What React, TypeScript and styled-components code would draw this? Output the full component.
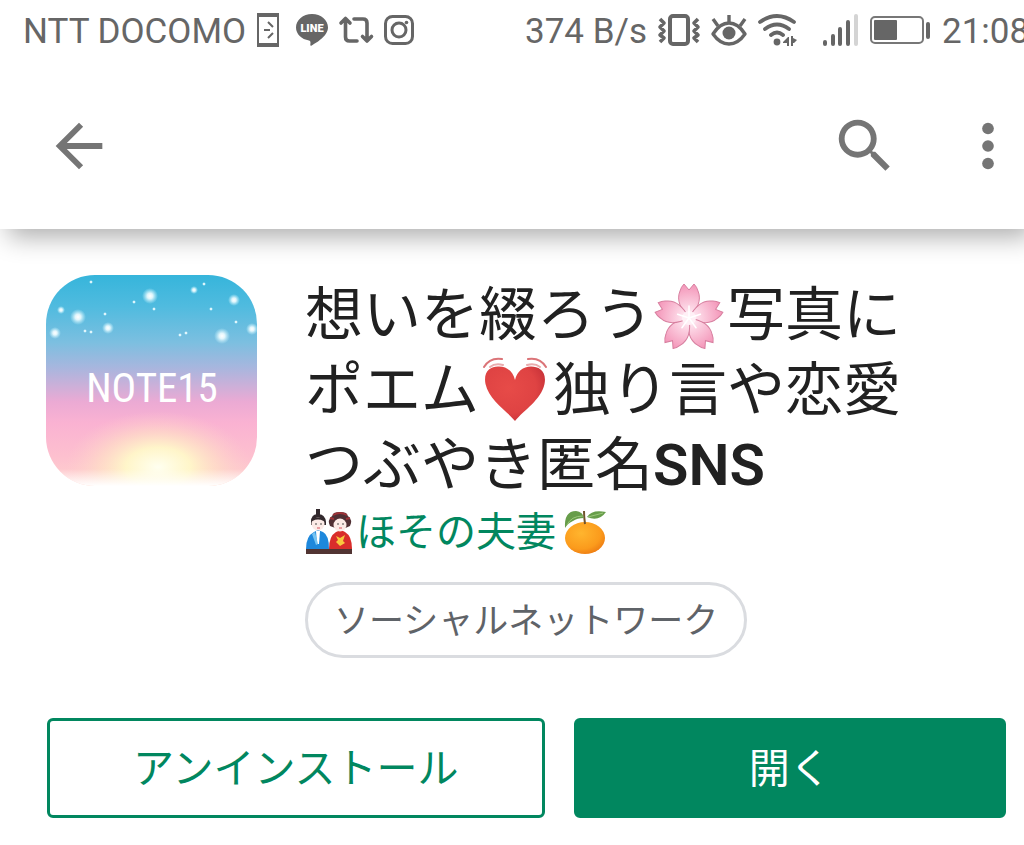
import React from 'react';
import styled, { createGlobalStyle } from 'styled-components';

const GlobalStyle = createGlobalStyle`
  *, *::before, *::after { box-sizing: border-box; }
  body {
    margin: 0;
    background: #fff;
    color: #212121;
    font-family: Roboto, "Noto Sans CJK JP", sans-serif;
  }
`;

const Page = styled.div`
  min-height: 100vh;
  padding-bottom: 24px;
  overflow: hidden;
`;

const Header = styled.header`
  background: #fff;
  box-shadow: 8px 8px 24px rgba(0, 0, 0, 0.32);
`;

const StatusBar = styled.div`
  display: flex;
  align-items: center;
  justify-content: space-between;
  height: 60px;
  padding-left: 23px;
  overflow: hidden;
  color: #666;
  font-size: 35px;
  line-height: 60px;
  white-space: nowrap;
`;

const StatusGroup = styled.div<{ $gap: number }>`
  display: flex;
  align-items: center;
  gap: ${(p) => p.$gap}px;
`;

const StatusText = styled.span<{ $width?: number }>`
  width: ${(p) => (p.$width ? `${p.$width}px` : 'auto')};
  padding-top: 3px;
  overflow: hidden;
`;

const Glyph = styled.svg`
  display: block;
  flex: none;
  overflow: visible;
`;

const Toolbar = styled.nav`
  display: flex;
  align-items: center;
  height: 169px;
  padding: 2px 1px 0 44px;
`;

const ToolbarActions = styled.div`
  display: flex;
  gap: 53px;
  margin-left: auto;
`;

const IconButton = styled.button`
  display: block;
  padding: 0;
  border: 0;
  background: none;
  color: #757575;
  cursor: pointer;
`;

const Listing = styled.main`
  padding: 46px 18px 0 46px;
`;

const Summary = styled.section`
  display: flex;
  align-items: flex-start;
  gap: 48px;
`;

const Details = styled.div`
  flex: 1;
  min-width: 0;
`;

const Title = styled.h1`
  margin: 0;
  font-size: 58px;
  font-weight: 400;
  line-height: 80px;
  white-space: nowrap;
`;

const TitleLine = styled.span`
  display: flex;
  align-items: flex-start;
  height: 75px;
`;

const Latin = styled.span`
  font-weight: 600;
`;

const Developer = styled.a`
  display: flex;
  align-items: flex-start;
  height: 62px;
  color: #01875f;
  font-size: 40px;
  line-height: 66px;
  text-decoration: none;
  white-space: nowrap;
`;

const Chip = styled.a`
  display: inline-block;
  margin-top: 20px;
  padding: 4px 26px 0;
  border: 3px solid #dadce0;
  border-radius: 38px;
  color: #5f6368;
  font-size: 35px;
  line-height: 66px;
  text-decoration: none;
  white-space: nowrap;
`;

const Actions = styled.div`
  display: flex;
  gap: 29px;
  margin-top: 60px;
  padding-left: 1px;
`;

const ActionButton = styled.button<{ $filled?: boolean }>`
  flex: ${(p) => (p.$filled ? 432 : 498)} 1 0;
  height: 100px;
  padding: 2px 0 0;
  border: 3px solid #01875f;
  border-radius: 6px;
  background: ${(p) => (p.$filled ? '#01875f' : '#fff')};
  color: ${(p) => (p.$filled ? '#fff' : '#01875f')};
  font-family: inherit;
  font-size: 41px;
  line-height: 60px;
  cursor: pointer;
`;

const DoorIcon = () => (
  <Glyph width="22" height="34" viewBox="0 0 22 34" fill="none" stroke="#666" strokeWidth="2">
    <path d="M1 1h20v32H1z" />
    <path d="M0 2h22M0 32h22" strokeWidth="4" />
    <path d="M7 17h6M11 9l5 5M11 25l5-5" />
  </Glyph>
);

const LineIcon = () => (
  <Glyph width="32" height="32" viewBox="0 0 32 32">
    <path fill="#666" d="M16 0C7 0 0 6 0 13.500c0 6.500 5.500 11.800 13 13 1.800.3 1.600 2 1.300 4.300-.1.900.6 1.100 1.400.6C20 29 32 22 32 13.500 32 6 25 0 16 0z" />
    <text x="16" y="18" textAnchor="middle" fill="#fff" fontFamily="Roboto, sans-serif" fontSize="11" fontWeight="900">LINE</text>
  </Glyph>
);

const RepostIcon = () => (
  <Glyph width="34" height="26" viewBox="0 0 34 26" fill="none" stroke="#666" strokeWidth="3.600" strokeLinecap="round" strokeLinejoin="round">
    <path d="M2 6l4.500-4.500L11 6M6.500 2v18q0 4 4 4H18M15 2h9q4 0 4 4v17M23.500 19.500L28 24l4.500-4.500" />
  </Glyph>
);

const CameraIcon = () => (
  <Glyph width="30" height="30" viewBox="0 0 30 30" fill="none" stroke="#666" strokeWidth="3">
    <rect x="1.500" y="1.500" width="27" height="27" rx="7" />
    <circle cx="15" cy="15" r="7" />
    <circle cx="22.500" cy="7.500" r="1.800" fill="#666" stroke="none" />
  </Glyph>
);

const VibrateIcon = () => (
  <Glyph width="42" height="34" viewBox="0 0 42 34" fill="none" stroke="#666" strokeWidth="3.600" strokeLinejoin="round">
    <rect x="12" y="3" width="18" height="28" rx="3" strokeWidth="4" />
    <path d="M2 6l4 4-4 4 4 4-4 4 4 3-4 4M40 6l-4 4 4 4-4 4 4 4-4 3 4 4" />
  </Glyph>
);

const EyeIcon = () => (
  <Glyph width="36" height="32" viewBox="0 0 36 32" fill="none" stroke="#666" strokeWidth="3.400" strokeLinejoin="round">
    <path d="M2 20Q9 9 18 9t16 11Q27 30 18 30T2 20z" />
    <path d="M18 9V1M7 12L2 5M29 12l5-7" />
    <circle cx="18" cy="19" r="6.500" fill="#666" stroke="none" />
  </Glyph>
);

const WifiIcon = () => (
  <Glyph width="39" height="32" viewBox="0 0 39 32" fill="none" stroke="#666" strokeWidth="3.800" strokeLinecap="round">
    <path d="M2 8q17-12 34 0M7 15q12-9 24 0M13 21q6-5 12 0" />
    <circle cx="19" cy="28" r="3.400" fill="#666" stroke="none" />
    <path fill="#666" stroke="none" d="M25 28l5-5h1v9h-2v-3h-4zM33 22h2v2l4 2-3 3h-1v3h-2z" />
  </Glyph>
);

const SignalIcon = () => (
  <Glyph width="35" height="32" viewBox="0 0 35 32" fill="none" stroke="#666" strokeWidth="4" strokeLinecap="round">
    <path d="M2 28v2M10 22v8M17 15v15M25 8v22" />
    <path d="M33 2v28" stroke="#d4d4d4" />
  </Glyph>
);

const BatteryIcon = () => (
  <Glyph width="60" height="28" viewBox="0 0 60 28">
    <rect x="1" y="1" width="52" height="26" rx="4" fill="none" stroke="#777" strokeWidth="2" />
    <rect x="4" y="4" width="23" height="20" rx="1" fill="#666" />
    <rect x="56" y="6" width="4" height="17" rx="2" fill="#666" />
  </Glyph>
);

const Blossom = () => (
  <Glyph role="img" aria-label="桜" width="74" height="75" viewBox="-5 0 74 75">
    <defs>
      <radialGradient id="petal" gradientUnits="userSpaceOnUse" cx="31" cy="42" r="34">
        <stop offset="0" stopColor="#fff5fa" />
        <stop offset="0.3" stopColor="#fcd5e4" />
        <stop offset="1" stopColor="#f392b6" />
      </radialGradient>
    </defs>
    <g fill="url(#petal)" stroke="#d77f9f" strokeWidth="1">
      {[0, 72, 144, 216, 288].map((angle) => (
        <path key={angle} transform={`rotate(${angle} 31 43)`} d="M31 43C23 35 18 25 22 16q1-4 4-7l5 6 5-6q3 3 4 7c4 9-1 19-9 27z" />
      ))}
    </g>
    <circle cx="31" cy="43" r="7" fill="#fff0f6" />
    <g stroke="#fff" strokeWidth="1.500" strokeLinecap="round">
      {[0, 72, 144, 216, 288].map((angle) => (
        <path key={angle} transform={`rotate(${angle} 31 43)`} d="M31 43V31" />
      ))}
    </g>
  </Glyph>
);

const BeatingHeart = () => (
  <Glyph role="img" aria-label="ときめくハート" width="74" height="75" viewBox="-3 0 74 75">
    <defs>
      <radialGradient id="heart" cx="0.4" cy="0.4" r="0.65">
        <stop offset="0" stopColor="#e74b48" />
        <stop offset="0.7" stopColor="#df4343" />
        <stop offset="1" stopColor="#c93339" />
      </radialGradient>
    </defs>
    <path fill="url(#heart)" d="M33 71C24 60 7 50 3.500 34 1 21 9 16 17 16.500c8 0 14 5 16 13.500 2-8.500 8-13.500 16-13.500s16 4.500 13.500 17.500C59 50 42 60 33 71z" />
    <g fill="none" stroke="#db7478" strokeWidth="2" strokeLinecap="round">
      <path d="M2 17Q8 7 20 9M64 17Q58 7 46 9" />
      <path d="M8 17q5-4 13-2M58 17q-5-4-13-2" stroke="#e9abad" />
    </g>
  </Glyph>
);

const HinaDolls = () => (
  <Glyph role="img" aria-label="ひな人形" width="51" height="62" viewBox="0 0 51 62">
    <path fill="#513432" d="M1 49h46v5H1z" />
    <path fill="#1e88dc" d="M1 49q0-13 8-17l4-2 5 2q6 3 6 17z" />
    <path fill="#d92d2b" d="M24 49q0-13 7-17l5-2 4 2q7 4 7 17z" />
    <path fill="#fff" d="M11 31h4l-1 13h-2z" />
    <path fill="#76c4f2" d="M10 32l3 12-2 1-4-11z" />
    <path fill="#f9c83e" d="M31 36l4 2 5-3-2 6 2 2-5 3-4-4 2-2z" />
    <path fill="#32292d" d="M11 9h4v7h-4zM6 22q0-8 7-8t8 8v3H6z" />
    <circle cx="13" cy="24" r="6.500" fill="#fcebe7" />
    <path fill="#503034" d="M25 26q-3-6 2-10l2-3q6-2 12 0l2 3q5 4 2 10-9 5-20 0z" />
    <ellipse cx="35" cy="25" rx="6.500" ry="6.500" fill="#fcebe7" />
    <path d="M28 15q7-4 14 0M25 18l4 1M45 18l-4 1" fill="none" stroke="#9e3237" strokeWidth="2" />
    <path d="M7 20q6-3 12 0" fill="none" stroke="#32292d" strokeWidth="2" />
    <g fill="#333"><circle cx="11" cy="24" r="0.800" /><circle cx="16" cy="24" r="0.800" /><circle cx="33" cy="24" r="0.800" /><circle cx="38" cy="24" r="0.800" /></g>
    <path d="M12 28h3M34 28h3" stroke="#d6505c" />
  </Glyph>
);

const Tangerine = () => (
  <Glyph role="img" aria-label="みかん" width="50" height="62" viewBox="0 0 50 62">
    <defs>
      <radialGradient id="tangerine" cx="0.4" cy="0.35" r="0.7">
        <stop offset="0" stopColor="#ffb52e" />
        <stop offset="0.7" stopColor="#fb9b1c" />
        <stop offset="1" stopColor="#ed7b12" />
      </radialGradient>
    </defs>
    <ellipse cx="29" cy="38" rx="20" ry="16" fill="url(#tangerine)" />
    <path d="M29 24q-1-7-1-13" fill="none" stroke="#70532d" strokeWidth="2" />
    <path fill="#679d4a" d="M9 28q-1-17 11-17 7 1 8 7-7 0-11 3-5 2-8 7zM31 17q5-8 19-5-7 10-19 5z" />
    <path d="M11 25q4-9 16-9M32 17l15-4" fill="none" stroke="#9cc77b" />
  </Glyph>
);

const STARS: [number, number, number][] = [
  [104, 21, 4], [32, 42, 4], [176, 61, 4], [188, 25, 3], [148, 15, 2], [62, 53, 3],
  [9, 58, 3], [15, 35, 2], [206, 54, 3], [45, 7, 1], [158, 9, 1], [59, 39, 1],
  [190, 47, 1], [108, 34, 1], [39, 56, 1], [45, 57, 1], [134, 60, 1], [140, 58, 1],
  [165, 34, 1], [88, 27, 1],
];

const AppLogo = () => (
  <Glyph role="img" aria-label="NOTE15" width="211" height="211" viewBox="0 0 211 211">
    <defs>
      <linearGradient id="sky" x1="0" y1="0" x2="0" y2="1">
        <stop offset="0" stopColor="#36b5db" />
        <stop offset="0.15" stopColor="#50bbdf" />
        <stop offset="0.32" stopColor="#7cbfe0" />
        <stop offset="0.44" stopColor="#a8b6de" />
        <stop offset="0.6" stopColor="#ebaad4" />
        <stop offset="0.7" stopColor="#fab2d2" />
        <stop offset="0.86" stopColor="#fdc0cf" />
        <stop offset="1" stopColor="#ffd3cd" />
      </linearGradient>
      <radialGradient id="sunrise">
        <stop offset="0" stopColor="#fffff0" />
        <stop offset="0.35" stopColor="#fffbc9" stopOpacity="0.9" />
        <stop offset="0.65" stopColor="#ffe9c4" stopOpacity="0.5" />
        <stop offset="1" stopColor="#ffd5cc" stopOpacity="0" />
      </radialGradient>
      <linearGradient id="horizon" x1="0" y1="0" x2="0" y2="1">
        <stop offset="0" stopColor="#fff" stopOpacity="0" />
        <stop offset="1" stopColor="#fff" />
      </linearGradient>
      <radialGradient id="star">
        <stop offset="0" stopColor="#fff" />
        <stop offset="0.35" stopColor="#effcff" stopOpacity="0.9" />
        <stop offset="1" stopColor="#c8f4ff" stopOpacity="0" />
      </radialGradient>
      <clipPath id="tile"><rect width="211" height="211" rx="49" /></clipPath>
    </defs>
    <g clipPath="url(#tile)">
      <rect width="211" height="211" fill="url(#sky)" />
      <ellipse cx="112" cy="192" rx="92" ry="56" fill="url(#sunrise)" />
      <rect y="194" width="211" height="17" fill="url(#horizon)" />
      {STARS.map(([x, y, size]) => (
        <circle key={`${x}-${y}`} cx={x} cy={y} r={size * 2} fill="url(#star)" />
      ))}
    </g>
    <text x="106" y="127" textAnchor="middle" fill="#fff" fontFamily="'Roboto Condensed', 'Liberation Sans Narrow', Roboto, sans-serif" fontSize="41">NOTE15</text>
  </Glyph>
);

const BackIcon = () => (
  <Glyph width="70" height="70" viewBox="0 0 24 24" fill="currentColor">
    <path d="M20 11H7.830l5.590-5.590L12 4l-8 8 8 8 1.410-1.410L7.830 13H20v-2z" />
  </Glyph>
);

const SearchIcon = () => (
  <Glyph width="70" height="70" viewBox="0 0 24 24" fill="currentColor">
    <path d="M15.500 14h-.79l-.28-.27A6.471 6.471 0 0 0 16 9.500 6.500 6.500 0 1 0 9.500 16c1.610 0 3.090-.59 4.230-1.570l.27.28v.79l5 4.990L20.490 19l-4.990-5zm-6 0C7.010 14 5 11.990 5 9.500S7.010 5 9.500 5 14 7.010 14 9.500 11.990 14 9.500 14z" />
  </Glyph>
);

const MoreIcon = () => (
  <Glyph width="70" height="70" viewBox="0 0 24 24" fill="currentColor">
    <circle cx="12" cy="6" r="2" />
    <circle cx="12" cy="12" r="2" />
    <circle cx="12" cy="18" r="2" />
  </Glyph>
);

export default function App() {
  return (
    <Page>
      <GlobalStyle />
      <Header>
        <StatusBar>
          <StatusGroup $gap={17}>
            <StatusGroup $gap={11}>
              <StatusText>NTT DOCOMO</StatusText>
              <DoorIcon />
            </StatusGroup>
            <StatusGroup $gap={11}>
              <LineIcon />
              <RepostIcon />
              <CameraIcon />
            </StatusGroup>
          </StatusGroup>
          <StatusGroup $gap={26}>
            <StatusGroup $gap={11}>
              <StatusText>374 B/s</StatusText>
              <VibrateIcon />
              <EyeIcon />
              <WifiIcon />
            </StatusGroup>
            <StatusGroup $gap={12}>
              <SignalIcon />
              <BatteryIcon />
              <StatusText $width={82}>21:08</StatusText>
            </StatusGroup>
          </StatusGroup>
        </StatusBar>
        <Toolbar>
          <IconButton type="button" aria-label="戻る"><BackIcon /></IconButton>
          <ToolbarActions>
            <IconButton type="button" aria-label="検索"><SearchIcon /></IconButton>
            <IconButton type="button" aria-label="その他"><MoreIcon /></IconButton>
          </ToolbarActions>
        </Toolbar>
      </Header>
      <Listing>
        <Summary>
          <AppLogo />
          <Details>
            <Title>
              <TitleLine>想いを綴ろう<Blossom />写真に</TitleLine>
              <TitleLine>ポエム<BeatingHeart />独り言や恋愛</TitleLine>
              <TitleLine>つぶやき匿名<Latin>SNS</Latin></TitleLine>
            </Title>
            <Developer href="#developer"><HinaDolls />ほその夫妻<Tangerine /></Developer>
            <Chip href="#category">ソーシャルネットワーク</Chip>
          </Details>
        </Summary>
        <Actions>
          <ActionButton type="button">アンインストール</ActionButton>
          <ActionButton type="button" $filled>開く</ActionButton>
        </Actions>
      </Listing>
    </Page>
  );
}
